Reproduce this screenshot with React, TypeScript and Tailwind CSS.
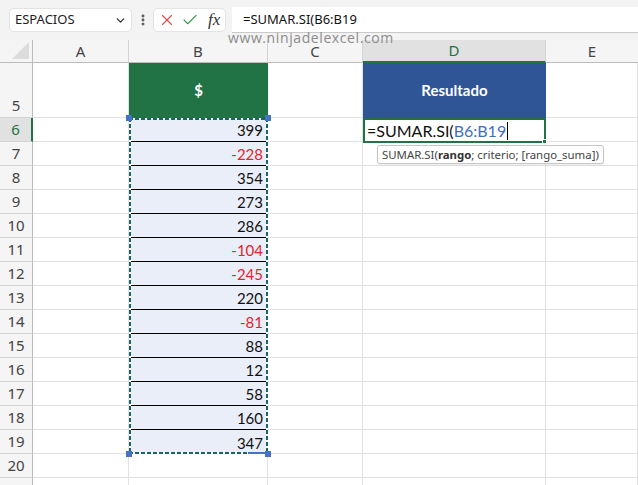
import { Check, ChevronDown, EllipsisVertical, X } from 'lucide-react'

const ui = { fontFamily: '"Noto Sans", "Open Sans", sans-serif' }
const cell = { fontFamily: 'Lato, "Open Sans", sans-serif' }

const values = [399, -228, 354, 273, 286, -104, -245, 220, -81, 88, 12, 58, 160, 347]
const bodyRows = [5, 6, 7, 8, 9, 10, 11, 12, 13, 14, 15, 16, 17, 18, 19, 20, 21]

function rowHeight(n: number) {
  return n === 5 ? 'h-[55px]' : 'h-[24px]'
}

function BlankColumn({ width }: { width: string }) {
  return (
    <div className={`flex flex-col ${width}`}>
      {bodyRows.map(n => (
        <div key={n} className={`${rowHeight(n)} shrink-0 border-b border-r border-[#e1e1e1]`} />
      ))}
    </div>
  )
}

function Handle() {
  return <div className="w-[6px] h-[6px] bg-[#4472c4]" />
}

function ColumnB() {
  return (
    <div className="flex flex-col w-[139px]">
      <div className="h-[55px] shrink-0 bg-[#217346] flex items-center justify-center text-white font-bold text-[15px]" style={cell}>
        $
      </div>
      <div className="relative flex flex-col">
        {values.map((v, i) => (
          <div
            key={i}
            className={`h-[24px] shrink-0 bg-[#e9eef8] flex items-end justify-end pr-[5px] pb-[1px] text-[15px] leading-[20px] ${i < values.length - 1 ? 'border-b border-black' : ''} ${v < 0 ? 'text-[#e3242b]' : 'text-[#111]'}`}
            style={cell}
          >
            {v}
          </div>
        ))}
        {/* marching ants */}
        <div className="absolute inset-x-0 top-0 h-[2px] bg-[repeating-linear-gradient(90deg,#1a6664_0_4px,#ffffff_4px_6px)]" />
        <div className="absolute inset-x-0 bottom-0 h-[2px] bg-[repeating-linear-gradient(90deg,#1a6664_0_4px,#ffffff_4px_6px)]" />
        <div className="absolute inset-y-0 left-0 w-[2px] bg-[repeating-linear-gradient(180deg,#1a6664_0_4px,#ffffff_4px_6px)]" />
        <div className="absolute inset-y-0 right-0 w-[2px] bg-[repeating-linear-gradient(180deg,#1a6664_0_4px,#ffffff_4px_6px)]" />
        <div className="absolute bottom-0 right-[2px] w-[18px] h-[2px] bg-[#4472c4]" />
        <div className="absolute -top-[3px] -left-[3px]"><Handle /></div>
        <div className="absolute -top-[3px] -right-[3px]"><Handle /></div>
        <div className="absolute -bottom-[3px] -left-[3px]"><Handle /></div>
        <div className="absolute -bottom-[3px] -right-[3px]"><Handle /></div>
      </div>
      {[20, 21].map(n => (
        <div key={n} className="h-[24px] shrink-0 border-b border-r border-[#e1e1e1]" />
      ))}
    </div>
  )
}

function ColumnD() {
  return (
    <div className="relative z-10 flex flex-col w-[183px]">
      <div className="h-[55px] shrink-0 bg-[#2f5597] flex items-center justify-center text-white font-bold text-[15px]" style={cell}>
        Resultado
      </div>
      <div className="relative h-[25px] shrink-0 -mb-[1px] border-2 border-[#217346] flex items-center pl-[2px] text-[16px] text-[#111] bg-white" style={cell}>
        <span>=SUMAR.SI(</span>
        <span className="text-[#3f6fc0]">B6:B19</span>
        <span className="ml-[1px] w-[1px] h-[18px] bg-black" />
        <div className="absolute -bottom-[3px] -right-[3px] w-[5px] h-[5px] bg-[#217346] border border-white" />
        {/* argument tooltip */}
        <div
          className="absolute left-[12px] top-[25px] h-[19px] px-[4px] flex items-center bg-white border border-[#c6c6c6] rounded-[3px] text-[11.4px] text-[#444] whitespace-nowrap shadow-[0_1px_2px_rgba(0,0,0,0.08)]"
          style={ui}
        >
          SUMAR.SI(<b className="font-bold text-[#333]">rango</b>; criterio; [rango_suma])
        </div>
      </div>
      {bodyRows.slice(2).map(n => (
        <div key={n} className="h-[24px] shrink-0 border-b border-r border-[#e1e1e1]" />
      ))}
    </div>
  )
}

export default function App() {
  return (
    <div className="relative w-[638px] h-[485px] overflow-hidden bg-white" style={ui}>
      {/* toolbar */}
      <div className="h-[40px] bg-[#f3f3f3] flex items-start pt-[7px]">
        <div className="ml-[9px] mt-[1px] w-[123px] h-[24px] bg-white border border-[#e3e3e3] rounded-[5px] flex items-center justify-between pl-[5px] pr-[4px]">
          <span className="text-[13px] text-[#222]">ESPACIOS</span>
          <ChevronDown size={13} strokeWidth={2.4} className="text-[#333]" />
        </div>
        <div className="w-[21px] h-[24px] mt-[1px] flex items-center justify-center">
          <EllipsisVertical size={14} strokeWidth={3} className="text-[#555]" />
        </div>
        <div className="mt-[1px] w-[73px] h-[24px] bg-white border border-[#e3e3e3] rounded-[5px] flex items-center pl-[4px] gap-[5px]">
          <X size={18} strokeWidth={1.5} className="text-[#e04848]" />
          <Check size={18} strokeWidth={1.5} className="text-[#3a9b4e]" />
          <span className="ml-[4px] text-[17px] italic text-[#333]" style={{ fontFamily: '"Liberation Serif", serif' }}>
            fx
          </span>
        </div>
        <div className="ml-[6px] flex-1 h-[26px] bg-white border-b border-[#c9c9c9] flex items-center pl-[11px]">
          <span className="text-[13px] text-[#111]">=SUMAR.SI(B6:B19</span>
        </div>
      </div>

      {/* column headers */}
      <div className="flex h-[23px] bg-[#f5f5f5] text-[15px] text-[#444]">
        <div className="relative w-[33px] border-r border-b border-[#bcbcbc]">
          <div className="absolute right-[3px] bottom-[3px] w-[17px] h-[17px] bg-[#dcdcdc] [clip-path:polygon(100%_0,100%_100%,0_100%)]" />
        </div>
        <div className="w-[96px] flex items-center justify-center border-r border-b border-[#d4d4d4] border-b-[#bcbcbc]">A</div>
        <div className="w-[139px] flex items-center justify-center border-r border-b border-[#d4d4d4] border-b-[#bcbcbc]">B</div>
        <div className="w-[95px] flex items-center justify-center border-r border-b border-[#d4d4d4] border-b-[#bcbcbc]">C</div>
        <div className="w-[183px] flex items-center justify-center bg-[#e1e1e1] text-[#1e7145] border-r border-[#d4d4d4] border-b-2 border-b-[#217346]">D</div>
        <div className="flex-1 flex items-center justify-center border-b border-[#bcbcbc]">E</div>
      </div>

      {/* grid body */}
      <div className="flex">
        <div className="flex flex-col w-[33px] text-[15px] text-[#444]">
          {bodyRows.map(n => (
            <div
              key={n}
              className={`${rowHeight(n)} shrink-0 flex items-end justify-center pb-[1px] ${
                n === 6
                  ? 'bg-[#e1e1e1] text-[#1e7145] border-r-2 border-r-[#217346] border-b border-b-[#d4d4d4]'
                  : 'bg-[#f5f5f5] border-r border-r-[#bcbcbc] border-b border-b-[#d4d4d4]'
              }`}
            >
              {n < 21 ? n : ''}
            </div>
          ))}
        </div>
        <BlankColumn width="w-[96px]" />
        <ColumnB />
        <BlankColumn width="w-[95px]" />
        <ColumnD />
        <div className="flex-1">
          <BlankColumn width="w-full" />
        </div>
      </div>

      {/* watermark */}
      <div className="absolute left-[228px] top-[27px] text-[14px] tracking-[0.6px] text-[#8c8c8c]" style={{ fontFamily: '"Open Sans", sans-serif' }}>
        www.ninjadelexcel.com
      </div>
    </div>
  )
}
